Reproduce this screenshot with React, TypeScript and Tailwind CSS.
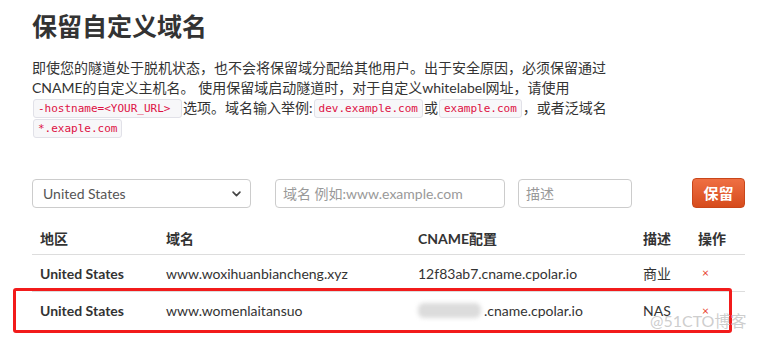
import React from 'react';

const font = { fontFamily: 'Lato, "Noto Sans CJK SC", sans-serif' };

function Code({ children }: { children: React.ReactNode }) {
  return (
    <code className="mx-[1px] inline-block whitespace-pre rounded-[3px] border border-[#e1e1e8] bg-[#f7f7f9] px-[4px] font-['DejaVu_Sans_Mono',monospace] text-[11px] leading-[17px] text-[#dd1144] align-[1px]">
      {children}
    </code>
  );
}

const rows = [
  { region: 'United States', domain: 'www.woxihuanbiancheng.xyz', cname: '12f83ab7.cname.cpolar.io', desc: '商业', hidden: false },
  { region: 'United States', domain: 'www.womenlaitansuo', cname: '.cname.cpolar.io', desc: 'NAS', hidden: true },
];

export default function App() {
  return (
    <div className="relative h-[341px] w-[759px] overflow-hidden bg-white text-[#333]" style={font}>
      <div className="w-[713px] pt-[11px] ml-[32px]">
        <h1 className="text-[25px] font-bold leading-[30px] text-[#333]">保留自定义域名</h1>

        {/* description */}
        <p className="mt-[17px] text-[14px] leading-[20px] text-[#333]">
          即使您的隧道处于脱机状态，也不会将保留域分配给其他用户。出于安全原因，必须保留通过
          <br />
          CNAME的自定义主机名。 使用保留域启动隧道时，对于自定义whitelabel网址，请使用
          <br />
          <Code>{'-hostname=<YOUR_URL> '}</Code>选项。域名输入举例:<Code>dev.example.com</Code>或<Code>example.com</Code>，或者泛域名
          <br />
          <Code>*.exaple.com</Code>
        </p>

        {/* form */}
        <div className="mt-[40px] flex items-center">
          <div className="flex h-[29px] w-[219px] shrink-0 items-center justify-between rounded-[4px] border border-[#ccc] pl-[10px] pr-[8px] text-[14px] text-[#555]">
            <span>United States</span>
            <svg width="11" height="11" viewBox="0 0 16 16" fill="none" stroke="#444" strokeWidth="2.4" strokeLinecap="round" strokeLinejoin="round">
              <path d="M3 6l5 5 5-5" />
            </svg>
          </div>
          <div className="ml-[24px] flex h-[29px] w-[230px] shrink-0 items-center rounded-[4px] border border-[#ccc] px-[7px] text-[14px] text-[#999]">
            域名 例如:www.example.com
          </div>
          <div className="ml-[13px] flex h-[29px] w-[114px] shrink-0 items-center rounded-[4px] border border-[#ccc] px-[7px] text-[14px] text-[#999]">
            描述
          </div>
          <button className="ml-[60px] flex h-[30px] w-[53px] shrink-0 items-center justify-center rounded-[4px] border border-[#c9461a] bg-gradient-to-b from-[#ef6f42] to-[#d64b1b] text-[15px] font-bold text-white">
            保留
          </button>
        </div>

        {/* table */}
        <div className="mt-[14px] w-[713px] text-[14px]">
          <div className="grid h-[33px] grid-cols-[126px_252px_225px_55px_55px] items-center border-b border-[#ddd] font-bold">
            <div className="px-[8px]">地区</div>
            <div className="px-[8px]">域名</div>
            <div className="px-[8px]">CNAME配置</div>
            <div className="px-[8px]">描述</div>
            <div className="px-[8px]">操作</div>
          </div>
          {rows.map((r, i) => (
            <div key={i} className="grid h-[37px] grid-cols-[126px_252px_225px_55px_55px] items-center border-b border-[#ddd] last:border-b-0">
              <div className="px-[8px] font-bold">{r.region}</div>
              <div className="px-[8px]">{r.domain}</div>
              <div className="flex items-center px-[8px]">
                {r.hidden && <span className="mr-[3px] inline-block h-[15px] w-[63px] rounded-[6px] bg-[#dcdcdc] blur-[2px]" />}
                <span>{r.cname}</span>
              </div>
              <div className="px-[8px]">{r.desc}</div>
              <div className="px-[12px] text-[12px] text-[#e8412c]">×</div>
            </div>
          ))}
        </div>
      </div>

      {/* annotation box */}
      <div className="absolute left-[13px] top-[288px] h-[45px] w-[719px] rounded-[3px] border-[3px] border-[#f21b1b]" />

      {/* watermark */}
      <div className="absolute left-[650px] top-[309px] text-[16px] text-[#c8c8c8]/90">@51CTO博客</div>
    </div>
  );
}
